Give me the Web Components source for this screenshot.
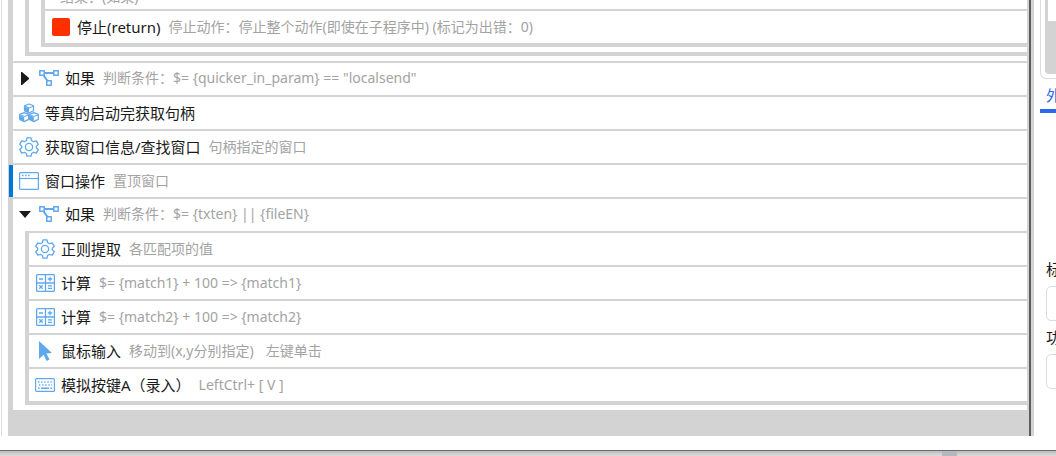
<!DOCTYPE html>
<html lang="zh-CN">
<head>
<meta charset="utf-8">
<title>动作编辑器</title>
<style>
html, body { height: 100%; }
body {
  margin: 0; overflow: hidden; background: #fff; color: #1a1a1a;
  font-family: "Noto Sans", "Noto Sans CJK SC", sans-serif;
  --line: #d3d3d3; --muted: #a3a3a3; --icon: #5fa8ee;
}
</style>
</head>
<body>
<action-editor>
  <step-list>
    <step-group>
      <step-group>
        <action-step marker note="结束：(如果)"></action-step>
        <action-step icon="stop" name="停止(return)" note="停止动作：停止整个动作(即使在子程序中) (标记为出错：0)"></action-step>
      </step-group>
    </step-group>
    <action-step icon="branch" arrow="closed" name="如果" note='判断条件：$= {quicker_in_param} == "localsend"'></action-step>
    <action-step icon="cubes" name="等真的启动完获取句柄"></action-step>
    <action-step icon="gear" name="获取窗口信息/查找窗口" note="句柄指定的窗口"></action-step>
    <action-step icon="window" name="窗口操作" note="置顶窗口" selected></action-step>
    <action-step icon="branch" arrow="open" name="如果" note="判断条件：$= {txten} || {fileEN}"></action-step>
    <step-group>
      <action-step icon="gear" name="正则提取" note="各匹配项的值"></action-step>
      <action-step icon="calc" name="计算" note="$= {match1} + 100 =&gt; {match1}"></action-step>
      <action-step icon="calc" name="计算" note="$= {match2} + 100 =&gt; {match2}"></action-step>
      <action-step icon="mouse" name="鼠标输入" note="移动到(x,y分别指定)" extra="左键单击"></action-step>
      <action-step icon="keyboard" name="模拟按键A（录入）" note="LeftCtrl+ [ V ]"></action-step>
    </step-group>
  </step-list>
  <side-panel slot="side">
    <form-field label="标"></form-field>
    <form-field label="功"></form-field>
  </side-panel>
</action-editor>

<script>
const ICONS = {
  stop: '<rect x="1" y="1" width="18" height="18" rx="2" fill="#ff3000"/>',
  branch: '<path d="M5.500 5h9M4.600 7.500l4 5.500" fill="none" stroke="currentColor" stroke-width="2"/><g fill="#fff" stroke="currentColor" stroke-width="1.500"><rect x=".8" y="2.800" width="4.400" height="4.400"/><rect x="14.800" y="2.800" width="4.400" height="4.400"/><rect x="7.800" y="12.800" width="4.400" height="4.400"/></g>',
  cubes: '<g fill="#fff" stroke="currentColor" stroke-width="1.200" stroke-linejoin="round"><path d="M10 1l4.500 1.800v5L10 10 5.500 7.800v-5z"/><path d="M5.200 9.600l4.500 1.800v5l-4.500 2.200L.7 16.400v-5z"/><path d="M14.800 9.600l4.500 1.800v5l-4.500 2.200-4.500-2.200v-5z"/></g><g fill="currentColor"><path d="M5.500 3.500L10 5.300V10L5.500 7.800z"/><path d="M.7 12.100l4.500 1.800v4.700L.7 16.400z"/><path d="M10.300 12.100l4.500 1.800v4.700l-4.500-2.200z"/></g><path d="M10 5l4.500-1.800M5.200 13.600l4.500-1.800M14.800 13.600l4.500-1.800M5.500 2.800L10 4.800M.7 11.400l4.500 2M10.300 11.400l4.500 2" fill="none" stroke="currentColor" stroke-width="1"/>',
  gear: '<g fill="none" stroke="currentColor" stroke-width="1.300" stroke-linejoin="round"><path d="M8 .8h4l.6 2.700 2 1.200 2.700-.8 2 3.400-2 1.900v1.600l2 1.900-2 3.400-2.700-.8-2 1.200-.6 2.700H8l-.6-2.700-2-1.200-2.700.8-2-3.400 2-1.900V9.200l-2-1.900 2-3.400 2.700.8 2-1.200z"/><circle cx="10" cy="10" r="3.600"/></g>',
  window: '<g fill="none" stroke="currentColor" stroke-width="1.200"><rect x=".6" y="1.600" width="18.800" height="16.800" rx="1"/><path d="M1 7.500h18"/></g><path d="M3 4.600h1.600M6 4.600h1.600M9 4.600h1.600" stroke="currentColor" stroke-width="1.500"/>',
  calc: '<g fill="none" stroke="currentColor" stroke-width="1.300"><rect x="1.600" y="1.600" width="17.800" height="16.800" rx="1"/><path d="M10.500 2v16M2 10h17M4 6h4M12.800 6h4.400M15 3.800v4.400M4.300 12.300l3.400 3.400M7.700 12.300l-3.400 3.400M13 12.800h4M13 15.300h4"/></g>',
  mouse: '<path d="M4 0l13 12-5.600.6 3.100 6-3 1.400-2.800-6.300L4 18z" fill="currentColor"/>',
  keyboard: '<rect x=".6" y="3.600" width="18.800" height="12.800" rx="1" fill="none" stroke="currentColor" stroke-width="1.200"/><g stroke="currentColor" stroke-width="1.400"><path d="M3 7h14" stroke-dasharray="1.400 1.700"/><path d="M4 10h13" stroke-dasharray="1.400 1.700"/><path d="M3 13.300h1.500M6 13.300h8M15.500 13.300H17"/></g>'
};

function root(el, html) {
  el.attachShadow({ mode: 'open' }).innerHTML = html;
}

customElements.define('action-editor', class extends HTMLElement {
  constructor() {
    super();
    root(this, `<style>
      :host { display: flex; flex-direction: column; height: 100%; }
      .main { flex: 1; min-height: 0; display: flex; margin-bottom: 14px; }
      .gutter { width: 1px; margin: 0 6px 0 1px; background: #dcdcdc; }
      .list { flex: 1; min-width: 0; display: flex; flex-direction: column; justify-content: flex-end;
        overflow: hidden; box-sizing: border-box; background: var(--line); padding: 0 2px 26px 5px; }
      .bar { width: 2px; background: #5c5c5c; }
      .edge { width: 3px; background: var(--line); }
      .side { width: 22px; display: flex; overflow: hidden; }
      footer { height: 5px; border-top: 1px solid #6a6a6a; background: linear-gradient(#bcbcbc, #dcdcdc); }
      footer i { display: block; width: 15px; height: 5px; margin: 0 99px 0 auto; background: #b4b8bc; }
    </style>
    <div class="main"><div class="gutter"></div><div class="list"><slot></slot></div>
    <div class="bar"></div><div class="edge"></div><div class="side"><slot name="side"></slot></div></div>
    <footer><i></i></footer>`);
  }
});

customElements.define('step-list', class extends HTMLElement {
  constructor() {
    super();
    root(this, `<style>
      :host { display: flow-root; flex: none; background: #fff; }
    </style><slot></slot>`);
  }
});

customElements.define('step-group', class extends HTMLElement {
  constructor() {
    super();
    root(this, `<style>
      :host { display: block; margin: 0 0 5px 12px; border: solid var(--line); border-width: 0 0 4px 4px; }
    </style><slot></slot>`);
  }
});

customElements.define('action-step', class extends HTMLElement {
  constructor() {
    super();
    const a = n => this.getAttribute(n);
    const span = n => a(n) ? `<span class="${n}"></span>` : '';
    const arrow = a('arrow') ? `<svg class="arrow" width="12" height="16" viewBox="0 0 12 16"><path fill="#1a1a1a" d="${a('arrow') === 'open' ? 'M0 5h12L6 12z' : 'M2 2v13h1l7-6v-1L3 2z'}"/></svg>` : '';
    const icon = a('icon') ? `<svg class="icon" width="20" height="20" viewBox="0 0 20 20">${ICONS[a('icon')]}</svg>` : '';
    root(this, `<style>
      :host { display: flex; align-items: center; height: 32px; padding-left: 6px; border-top: 2px solid var(--line);
        background: #fff; white-space: pre; line-height: 20px; }
      :host([marker]) { box-sizing: border-box; height: 34px; padding: 8px 0 0 15px; }
      :host([arrow]) { box-sizing: border-box; height: 34px; padding-bottom: 2px; }
      :host([selected]) { position: relative; }
      :host([selected])::before { content: ""; position: absolute; left: -4px; top: 0; bottom: 0; width: 4px; background: #0078d7; }
      .arrow { margin-right: 8px; }
      .icon { margin-right: 6px; color: var(--icon); }
      .name { font-size: 15px; margin-right: 8px; }
      .note, .extra { font-size: 14px; color: var(--muted); }
      .extra { margin-left: 12px; }
      svg, span { flex: none; }
    </style>${arrow}${icon}${span('name')}${span('note')}${span('extra')}`);
    for (const n of ['name', 'note', 'extra']) {
      const s = this.shadowRoot.querySelector('.' + n);
      if (s) s.textContent = a(n);
    }
  }
});

customElements.define('side-panel', class extends HTMLElement {
  constructor() {
    super();
    root(this, `<style>
      :host { display: block; flex: none; width: 240px; padding-left: 6px; }
      .card { height: 79px; box-sizing: border-box; border: 1px solid #dcdcdc; border-top: 0; border-radius: 0 0 6px 6px; padding: 0 4px 4px; }
      .inner { height: 74px; box-sizing: border-box; background: var(--line); border-radius: 0 0 4px 4px; padding-left: 3px; }
      .page { height: 21px; background: #fff; }
      .tab { display: block; height: 30px; padding: 0 6px; border: 0; border-bottom: 4px solid #2f66ee;
        background: none; color: #2f66ee; font: 15px/32px "Noto Sans CJK SC", sans-serif; box-sizing: content-box; text-align: left; }
      .fields { padding: 141px 0 0 6px; }
    </style>
    <div class="card"><div class="inner"><div class="page"></div></div></div>
    <button class="tab">外</button>
    <div class="fields"><slot></slot></div>`);
  }
});

customElements.define('form-field', class extends HTMLElement {
  constructor() {
    super();
    root(this, `<style>
      :host { display: block; margin-bottom: 1px; }
      label { display: block; font-size: 15px; line-height: 30px; padding-bottom: 2px; }
      input { display: block; width: 200px; height: 35px; box-sizing: border-box; border: 1px solid #dcdcdc; border-radius: 5px; background: #fff; }
    </style><label for="f"></label><input id="f" type="text">`);
    this.shadowRoot.querySelector('label').textContent = this.getAttribute('label');
  }
});
</script>
</body>
</html>
